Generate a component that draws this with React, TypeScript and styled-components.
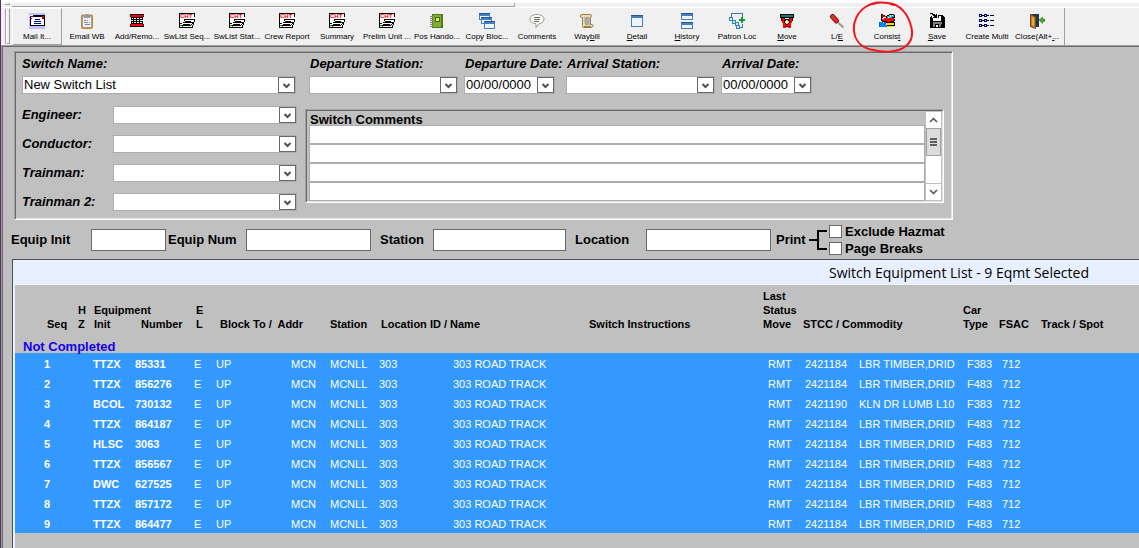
import React, { ReactNode, useId } from 'react';
import styled, { createGlobalStyle } from 'styled-components';

const GlobalStyle = createGlobalStyle`
  *, *::before, *::after { box-sizing: border-box; }
  body {
    margin: 0;
    background: #c0c0c0;
    color: #000;
    font: 13px/18px "Liberation Sans", Arial, sans-serif;
    overflow: hidden;
  }
  button, input, select { font: inherit; color: inherit; margin: 0; border-radius: 0; }
`;

const Window = styled.div`
  min-height: 100vh;
  display: flex;
  flex-direction: column;
  border-left: 1px solid #5b2f5f;
`;

/* ---------- toolbar ---------- */

const TopStrip = styled.div`
  height: 7px;
  border-top: 3px solid #fff;
  background: #f0f0f0;
  display: flex;
  gap: 2px;
  padding-left: 4px;
`;

const StripGrip = styled.span`
  width: 5px;
  height: 2px;
  border: solid #a0a0a0;
  border-width: 0 1px 1px 0;
`;

const StripEdge = styled.span`
  width: 503px;
  height: 4px;
  border: solid #a0a0a0;
  border-width: 0 1px 1px 0;
`;

const Toolbar = styled.header`
  height: 38px;
  display: flex;
  border-top: 1px solid #fff;
  background: #f0f0f0;
  padding-left: 4px;
`;

const Grip = styled.div`
  width: 5px;
  height: 35px;
  margin: 1px 2px 0 0;
  border: solid #a0a0a0;
  border-width: 0 1px;
  box-shadow: inset 1px 0 #fff, inset 0 -1px #a0a0a0;
`;

const Tools = styled.nav`
  display: flex;
  border-right: 1px solid #a0a0a0;
  padding-right: 2px;
`;

const ToolButton = styled.button<{ $raised?: boolean }>`
  position: relative;
  width: 50px;
  height: 37px;
  padding: 4px 0 0;
  display: flex;
  flex-direction: column;
  align-items: center;
  gap: 3px;
  background: none;
  border: 1px solid transparent;
  border-color: ${(p) => (p.$raised ? '#fff #a0a0a0 #a0a0a0 #fff' : 'transparent')};
  font-size: 8px;
  line-height: 10px;
  white-space: nowrap;

  & > svg { flex: none; }
`;

const Mark = styled.svg`
  position: absolute;
  left: -11px;
  top: -9px;
  z-index: 2;
  pointer-events: none;
`;

const Glyph = ({ children, crisp = true }: { children: ReactNode; crisp?: boolean }) => (
  <svg width="16" height="16" viewBox="0 0 16 16" fill="none" shapeRendering={crisp ? 'crispEdges' : 'auto'} aria-hidden>
    {children}
  </svg>
);

const palette: Record<string, string> = {
  k: '#000', w: '#fff', r: '#f00', c: '#00c8c8', b: '#0060ff', y: '#ffd800',
  g: '#808080', n: '#000080', t: '#008080', d: '#c00000',
};

const Pixels = ({ rows }: { rows: string[] }) => (
  <Glyph>
    {rows.flatMap((row, y) =>
      row.split('').map((ch, x) =>
        palette[ch] ? <rect key={`${x}-${y}`} x={x} y={y} width="1" height="1" fill={palette[ch]} /> : null,
      ),
    )}
  </Glyph>
);

const MailIcon = () => (
  <Glyph>
    <path fill="#c0c0ff" d="M0 0h16v16H0z" />
    <path fill="#000" d="M1 2h15v11H1z" />
    <path fill="#fff" d="M2 4h13v8H2zM1 2h3v1H1z" />
    <path fill="#800080" d="M1 3h4v1H1zM1 5h2v1H1z" />
    <path fill="#c00000" d="M13 3h2v3h-2z" />
    <path fill="#0000a0" d="M6 6h5v1H6zM5 8h7v1H5zM5 10h7v1H5z" />
  </Glyph>
);

const ClipboardIcon = () => (
  <Glyph crisp={false}>
    <rect x="2.5" y="2" width="11" height="13.5" rx="1" fill="#c89a5b" stroke="#b08850" />
    <path fill="#eef3fb" d="M4 4h8v10H4z" />
    <path fill="#8f9bb0" d="M5 3h6v2H5zM6.500 1h3v2h-3z" />
    <path stroke="#6c8cc0" d="M5 7.500h2M8 7.500h1M5 9.500h4M10 9.500h1M6 11.500h5" />
  </Glyph>
);

const TrackIcon = () => (
  <Pixels
    rows={[
      '',
      ' kkkkkkkkkkkkkk ',
      ' rrrrrrrrrrrrrr ',
      ' krrrrrrrrrrrrk ',
      '  kkkkkkkkkkkk  ',
      '  kwkwwkwwkwwk  ',
      '  kkkkkkkkkkkk  ',
      '    k  k  k     ',
      '  kkkkkkkkkkkk  ',
      '  kwkwwkwwkwwk  ',
      '  kkkkkkkkkkkk  ',
      ' krrrrrrrrrrrrk ',
      ' rrrrrrrrrrrrrr ',
      ' kkkkkkkkkkkkkk ',
    ]}
  />
);

const ChtIcon = () => (
  <Glyph>
    <path fill="#fff" d="M1 1h14v8l-2 6H1z" />
    <path stroke="#000" d="M.500 15V.500h15V4M5 6.500h10.500V9M5 6v2M4 9.500h10V12M6 8.500h6M2.500 12.500h9l2-2M4 11.500h7M1 14.500h12V12M15.500 6v3M1 10.500h2" />
    <path stroke="#008000" d="M1 12.500h2M3.500 13v1" />
    <text x="1" y="5" fill="#f00" fontFamily="Liberation Sans, sans-serif" fontWeight="700" fontSize="6">CHT</text>
  </Glyph>
);

const BookIcon = () => (
  <Glyph>
    <path fill="#4f7a1c" d="M3 1h11v14H3z" />
    <path fill="#7fb02c" d="M4 2h8v12H4z" />
    <path fill="#3d6414" d="M6 4h5v5H6z" />
    <path fill="#f4e84c" d="M7 5h3v3H7z" />
    <path stroke="#888" d="M1 3.500h3M1 5.500h3M1 7.500h3M1 9.500h3M1 11.500h3M1 13.500h3" />
  </Glyph>
);

const Pane = ({ x, y, w, h }: { x: number; y: number; w: number; h: number }) => (
  <>
    <path fill="#4a7ebb" d={`M${x} ${y}h${w}v${h}h-${w}z`} />
    <path fill="#1f56a8" d={`M${x} ${y}h${w}v1h-${w}z`} />
    <path fill="#eef6fd" d={`M${x + 1} ${y + 3}h${w - 2}v${h - 4}h-${w - 2}z`} />
  </>
);

const CopyIcon = () => (
  <Glyph>
    <Pane x={0} y={0} w={11} h={7} />
    <Pane x={2} y={4} w={11} h={7} />
    <Pane x={5} y={8} w={11} h={8} />
  </Glyph>
);

const CommentIcon = () => (
  <Glyph crisp={false}>
    <path fill="#fffef4" stroke="#999" d="M8 1.500c4 0 7 1.800 7 4.500s-2 4.500-5 4.700L7 14.500v-3.800C3 10.500 1 8.700 1 6s3-4.500 7-4.500z" />
    <path stroke="#666" d="M5 4.500h6M5 6.500h6M5 8.500h5" />
  </Glyph>
);

const ScrollIcon = () => (
  <Glyph crisp={false}>
    <path fill="#ecd9ab" stroke="#9a7b45" d="M2.500 1.500h9c1.500 0 1.500 2.500 0 2.500v7.500h1.500c1.500 0 1 3-.5 3H5c-2 0-1.500-2-1.500-3V4.500h-1c-1.500 0-1.500-3 0-3z" />
    <path stroke="#5877a5" d="M5.500 5h5M5.500 7h5M5.500 9h5M6 11h4.500" />
    <path stroke="#9a7b45" d="M5 13.500h7" />
  </Glyph>
);

const DetailIcon = () => (
  <Glyph>
    <Pane x={2} y={2} w={12} h={12} />
  </Glyph>
);

const HistoryIcon = () => (
  <Glyph>
    <Pane x={2} y={0} w={12} h={7} />
    <Pane x={2} y={9} w={12} h={7} />
  </Glyph>
);

const PatronIcon = () => (
  <Glyph>
    <path stroke="#3a78b5" d="M2.500 4V.500h11V4M13.500 11v3.500H11" />
    <path stroke="#2f86b5" fill="#d8effb" d="M.500 4.500h3v3h-3zM3.500 7.500h3v3h-3zM6.500 9.500h3v3h-3zM7.500 12.500h3v3h-3z" />
    <path stroke="#159a2c" strokeWidth="2" d="M10 7h6M13 4v6" />
  </Glyph>
);

const MoveIcon = () => (
  <Pixels
    rows={[
      '',
      ' kkkkkkkkkkkkkk ',
      ' kttttttttttttk ',
      ' kttttttttttttk ',
      ' kkkkkkkkkkkkkk ',
      '  krrk    krrk  ',
      '  krrrkkkkrrrk  ',
      '  krrkkyykkrrk  ',
      '   rrkywwykrr   ',
      '   rrkywwykrr   ',
      '    rrkyykrr    ',
      '    rrrkkrrr    ',
      '    rrrrrrrr    ',
      '    rrrkkrrr    ',
      '    rrr  rrr    ',
    ]}
  />
);

const ScrewdriverIcon = () => (
  <Glyph crisp={false}>
    <path stroke="#8c1414" strokeWidth="5" strokeLinecap="round" d="M3.500 3.500l4 4.500" />
    <path stroke="#e03030" strokeWidth="3" strokeLinecap="round" d="M3.500 3.500l4 4.500" />
    <path stroke="#999" strokeWidth="2" d="M9.500 10l5 4.500" />
  </Glyph>
);

const ConsistIcon = () => (
  <Pixels
    rows={[
      '',
      '  kk      kkkkk ',
      '  krrk  kkcwcwck',
      '  krrrrkcccwccck',
      '  kk   kcwccckkk',
      '  k  rrrrrrrrrr ',
      '  krrrrrrrrrrrrk',
      '  krrrrrrrrrrrrk',
      '   kkkkkrrrrkkk ',
      'bbcb bbkkkkkkkkk',
      'bcbbcbbyyyyyyyyk',
      'bbbcbbcyyyyyyyyk',
      'bcbbcbbckkkkkkkk',
      'bbcbbcbbyyyyyyy ',
    ]}
  />
);

const SaveIcon = () => (
  <Pixels
    rows={[
      ' kkk            ',
      '   kkk k        ',
      '    kkkk kkkkk  ',
      '  k  kkk kwwkkk ',
      ' kk kkkk kwwkkkk',
      ' kkkwwwwwwwwkkkk',
      ' kkkwwwwwwwwkkkk',
      ' kkkwwwwwwwwkkkk',
      ' kkkkkkkkkkkkkkk',
      ' kkkgggggggggkkk',
      ' kkkgggggggggkkk',
      ' kkkggkkkkggkkkk',
      ' kkkggkwwkggkkkk',
      ' kkkggkwwkggkkkk',
      ' kkkkkkkkkkkkkkk',
    ]}
  />
);

const MultiIcon = () => (
  <Pixels
    rows={[
      '',
      'nnn  nnn        ',
      'n nkkn nkk nnkk ',
      'nnn  nnn        ',
      '',
      '',
      'nnn  nnn        ',
      'n nkkn nkk nnkk ',
      'nnn  nnn        ',
      '',
      '',
      'nnn  nnn        ',
      'n nkkn nkk nnkk ',
      'nnn  nnn        ',
    ]}
  />
);

const DoorIcon = () => (
  <Glyph crisp={false}>
    <path fill="#20364f" d="M1 1h9v13H1z" />
    <path fill="#c07c2c" stroke="#7c4b13" d="M1.500 1.500L6.500 4v11.500l-5-2z" />
    <path fill="#e8a84e" d="M3 4l2 1v8l-2-1z" />
    <path fill="#46a52a" stroke="#2c7a18" strokeWidth=".5" d="M10 7l3.500-3v2H16v2.500h-2.500v2z" />
  </Glyph>
);

type Tool = { icon: () => ReactNode; label: ReactNode; id: string };

const tools: Tool[] = [
  { id: 'mail', icon: MailIcon, label: 'Mail It...' },
  { id: 'email', icon: ClipboardIcon, label: 'Email WB' },
  { id: 'add', icon: TrackIcon, label: 'Add/Remo...' },
  { id: 'seq', icon: ChtIcon, label: 'SwList Seq...' },
  { id: 'stat', icon: ChtIcon, label: 'SwList Stat...' },
  { id: 'crew', icon: ChtIcon, label: 'Crew Report' },
  { id: 'summary', icon: ChtIcon, label: 'Summary' },
  { id: 'prelim', icon: ChtIcon, label: 'Prelim Unit ...' },
  { id: 'pos', icon: BookIcon, label: 'Pos Hando...' },
  { id: 'copy', icon: CopyIcon, label: 'Copy Bloc...' },
  { id: 'comments', icon: CommentIcon, label: 'Comments' },
  { id: 'waybill', icon: ScrollIcon, label: <>Way<u>b</u>ill</> },
  { id: 'detail', icon: DetailIcon, label: <><u>D</u>etail</> },
  { id: 'history', icon: HistoryIcon, label: <><u>H</u>istory</> },
  { id: 'patron', icon: PatronIcon, label: 'Patron Loc' },
  { id: 'move', icon: MoveIcon, label: <><u>M</u>ove</> },
  { id: 'le', icon: ScrewdriverIcon, label: <>L/<u>E</u></> },
  { id: 'consist', icon: ConsistIcon, label: <>Consis<u>t</u></> },
  { id: 'save', icon: SaveIcon, label: <><u>S</u>ave</> },
  { id: 'multi', icon: MultiIcon, label: 'Create Multi' },
  { id: 'close', icon: DoorIcon, label: <>Close(Alt+<u>.</u>..</> },
];

/* ---------- form panel ---------- */

const Main = styled.main`
  flex: 1;
  display: flex;
  flex-direction: column;
  border: solid #a0a0a0;
  border-width: 1px 0 0 1px;
  box-shadow: inset 1px 1px #696969;
`;

const sunken = `
  border: 1px solid;
  border-color: #a0a0a0 #fff #fff #a0a0a0;
  box-shadow: inset 1px 1px #696969, inset -1px -1px #e3e3e3;
`;

const FormPanel = styled.section`
  ${sunken}
  max-width: 939px;
  width: 100%;
  margin: 5px 0 0 12px;
  padding: 2px 8px 8px 7px;
  display: grid;
  grid-template-columns: 283px 1fr;
`;

const FieldLabel = styled.label`
  font-weight: 700;
  font-style: italic;
  line-height: 20px;
  white-space: nowrap;
`;

const Field = styled.div<{ $width: number }>`
  width: ${(p) => p.$width}px;
  display: flex;
  flex-direction: column;
  gap: 2px;
`;

const ComboBox = styled.div`
  position: relative;
  display: flex;
  height: 18px;
`;

const ComboSelect = styled.select`
  appearance: none;
  width: 100%;
  padding: 0 20px 0 1px;
  border: 1px solid #abadb3;
  background: #fff;
  line-height: 16px;
  outline: none;
`;

const ComboArrow = styled.span`
  position: absolute;
  top: 1px;
  right: 1px;
  bottom: 1px;
  width: 17px;
  display: grid;
  place-items: center;
  border: 1px solid #696969;
  background: #fff;
  pointer-events: none;
`;

const Combo = ({ id, value = '' }: { id: string; value?: string }) => (
  <ComboBox>
    <ComboSelect id={id} defaultValue={value}>
      <option value={value}>{value}</option>
    </ComboSelect>
    <ComboArrow>
      <svg width="9" height="7" viewBox="0 0 9 7" fill="none" aria-hidden>
        <path d="M1.500 2l3 3 3-3" stroke="#505050" strokeWidth="2" />
      </svg>
    </ComboArrow>
  </ComboBox>
);

const LabelledCombo = ({ label, width, value }: { label: string; width: number; value?: string }) => {
  const id = useId();
  return (
    <Field $width={width}>
      <FieldLabel htmlFor={id}>{label}</FieldLabel>
      <Combo id={id} value={value} />
    </Field>
  );
};

const Crew = styled.div`
  display: flex;
  flex-direction: column;
  gap: 11px;
  margin-top: 12px;
`;

const CrewRow = styled.div`
  display: grid;
  grid-template-columns: 91px 184px;
  height: 18px;

  & > label { line-height: 18px; }
`;

const CrewLine = ({ label }: { label: string }) => {
  const id = useId();
  return (
    <CrewRow>
      <FieldLabel htmlFor={id}>{label}</FieldLabel>
      <Combo id={id} />
    </CrewRow>
  );
};

const Stops = styled.div`
  display: flex;
  gap: 11px;
  padding-left: 4px;

  & label { padding-left: 1px; }
`;

const Stop = styled.div`
  display: flex;
  gap: 6px;
`;

const Comments = styled.div`
  ${sunken}
  margin-top: 15px;
  padding: 1px 1px 1px 3px;
  display: flex;
`;

const CommentList = styled.div`
  flex: 1;
  min-width: 0;
  display: flex;
  flex-direction: column;
`;

const CommentTitle = styled.h2`
  margin: 0;
  padding-left: 1px;
  font-size: 13px;
  line-height: 17px;
  height: 14px;
`;

const CommentInput = styled.input`
  width: 100%;
  height: 19px;
  padding: 0 2px;
  border: 1px solid #abadb3;
  background: #fff;
  outline: none;
`;

const ScrollBar = styled.div`
  width: 17px;
  display: flex;
  flex-direction: column;
  background: #fff;
  border: 1px solid #c0c0c0;
`;

const ScrollButton = styled.button`
  height: 16px;
  padding: 0;
  border: 0;
  display: grid;
  place-items: center;
  background: #fff;
`;

const ScrollTrack = styled.div`
  flex: 1;
  border-bottom: 1px solid #c0c0c0;
`;

const ScrollThumb = styled.div`
  height: 28px;
  border: 1px solid #a0a0a0;
  background: #dcdcdc;
  display: grid;
  place-items: center;
`;

/* ---------- filters ---------- */

const Filters = styled.section`
  height: 39px;
  padding-left: 9px;
  display: flex;
  align-items: center;
  font-weight: 700;
`;

const FilterLabel = styled.label<{ $width: number }>`
  width: ${(p) => p.$width}px;
  white-space: nowrap;
`;

const FilterInput = styled.input<{ $width: number; $gap: number }>`
  width: ${(p) => p.$width}px;
  height: 22px;
  margin-right: ${(p) => p.$gap}px;
  padding: 0 3px;
  border: 1px solid #696969;
  background: #fff;
`;

const PrintLabel = styled.span`
  width: 33px;
`;

const Checks = styled.div`
  display: flex;
  flex-direction: column;
`;

const CheckLabel = styled.label`
  display: flex;
  align-items: center;
  gap: 3px;
  line-height: 17px;
  white-space: nowrap;
`;

const CheckBox = styled.input`
  appearance: none;
  width: 13px;
  height: 13px;
  border: 1px solid #696969;
  background: #fff;
`;

const filters = [
  { label: 'Equip Init', labelWidth: 80, width: 75, gap: 2 },
  { label: 'Equip Num', labelWidth: 78, width: 125, gap: 9 },
  { label: 'Station', labelWidth: 53, width: 133, gap: 9 },
  { label: 'Location', labelWidth: 71, width: 125, gap: 5 },
];

/* ---------- equipment list ---------- */

const ListPanel = styled.section`
  flex: 1;
  margin-left: 10px;
  padding-left: 2px;
  border: solid #505050;
  border-width: 1px 0 0 1px;
  background: #e8efff;
  display: flex;
  flex-direction: column;
`;

const ListTitle = styled.h1`
  margin: 0;
  padding-left: 814px;
  font: 400 14px/25px "Open Sans", "Segoe UI", sans-serif;
  white-space: nowrap;
`;

const ListBody = styled.div`
  flex: 1;
  background: #c0c0c0;
`;

const Table = styled.table`
  width: 100%;
  table-layout: fixed;
  border-collapse: collapse;
  font-size: 11px;
`;

const Head = styled.th<{ $indent?: number }>`
  height: 55px;
  padding: 0 0 9px ${(p) => p.$indent ?? 0}px;
  vertical-align: bottom;
  text-align: left;
  line-height: 14px;
  white-space: nowrap;
`;

const SplitHead = styled.span`
  display: grid;
  grid-template-columns: 47px 1fr;
`;

const GroupHead = styled.th`
  height: 13px;
  padding: 0 0 0 8px;
  text-align: left;
  font-size: 13px;
  line-height: 13px;
  color: #1400f0;
`;

const Row = styled.tr`
  background: #3399ff;
  color: #fff;
`;

const Cell = styled.td<{ $bold?: boolean; $indent?: number }>`
  height: 20px;
  padding: 2px 0 0 ${(p) => p.$indent ?? 0}px;
  line-height: 18px;
  font-weight: ${(p) => (p.$bold ? 700 : 400)};
  white-space: nowrap;
`;

const columns = [63, 15, 42, 59, 22, 75, 39, 49, 74, 119, 191, 37, 54, 108, 35, 39];

const equipment = [
  ['TTZX', '85331', '2421184', 'LBR TIMBER,DRID', 'F383'],
  ['TTZX', '856276', '2421184', 'LBR TIMBER,DRID', 'F483'],
  ['BCOL', '730132', '2421190', 'KLN DR LUMB L10', 'F383'],
  ['TTZX', '864187', '2421184', 'LBR TIMBER,DRID', 'F483'],
  ['HLSC', '3063', '2421184', 'LBR TIMBER,DRID', 'F483'],
  ['TTZX', '856567', '2421184', 'LBR TIMBER,DRID', 'F483'],
  ['DWC', '627525', '2421184', 'LBR TIMBER,DRID', 'F483'],
  ['TTZX', '857172', '2421184', 'LBR TIMBER,DRID', 'F483'],
  ['TTZX', '864477', '2421184', 'LBR TIMBER,DRID', 'F483'],
];

export default function App() {
  return (
    <Window>
      <GlobalStyle />
      <TopStrip>
        <StripGrip />
        <StripEdge />
      </TopStrip>
      <Toolbar>
        <Grip />
        <Tools>
          {tools.map(({ id, icon: Icon, label }) => (
            <ToolButton key={id} type="button" $raised={id === 'mail'}>
              <Icon />
              <span>{label}</span>
              {id === 'consist' && (
                <Mark width="62" height="54" viewBox="0 0 62 54" fill="none" aria-hidden>
                  <path
                    d="M42 5C33 1 22 2 15 6C5 12 1 22 2 31C3 41 10 48 21 50C33 53 47 52 54 46C60 41 61 33 59 26C56 14 48 4 36 3C30 2 25 2 21 4"
                    stroke="#f5141c"
                    strokeWidth="2"
                    strokeLinecap="round"
                  />
                </Mark>
              )}
            </ToolButton>
          ))}
        </Tools>
      </Toolbar>

      <Main>
        <FormPanel>
          <div>
            <LabelledCombo label="Switch Name:" width={274} value="New Switch List" />
            <Crew>
              <CrewLine label="Engineer:" />
              <CrewLine label="Conductor:" />
              <CrewLine label="Trainman:" />
              <CrewLine label="Trainman 2:" />
            </Crew>
          </div>
          <div>
            <Stops>
              <Stop>
                <LabelledCombo label="Departure Station:" width={149} />
                <LabelledCombo label="Departure Date:" width={91} value="00/00/0000" />
              </Stop>
              <Stop>
                <LabelledCombo label="Arrival Station:" width={149} />
                <LabelledCombo label="Arrival Date:" width={91} value="00/00/0000" />
              </Stop>
            </Stops>
            <Comments>
              <CommentList>
                <CommentTitle>Switch Comments</CommentTitle>
                {[1, 2, 3, 4].map((n) => (
                  <CommentInput key={n} type="text" aria-label={`Switch comment ${n}`} />
                ))}
              </CommentList>
              <ScrollBar>
                <ScrollButton type="button" aria-label="Scroll up">
                  <svg width="9" height="6" viewBox="0 0 9 6" fill="none" aria-hidden>
                    <path d="M1 5l3.500-3.500L8 5" stroke="#505050" strokeWidth="1.500" />
                  </svg>
                </ScrollButton>
                <ScrollThumb>
                  <svg width="7" height="8" viewBox="0 0 7 8" aria-hidden>
                    <path d="M0 0h7v2H0zM0 3h7v2H0zM0 6h7v2H0z" fill="#606060" />
                  </svg>
                </ScrollThumb>
                <ScrollTrack />
                <ScrollButton type="button" aria-label="Scroll down">
                  <svg width="9" height="6" viewBox="0 0 9 6" fill="none" aria-hidden>
                    <path d="M1 1l3.500 3.500L8 1" stroke="#505050" strokeWidth="1.500" />
                  </svg>
                </ScrollButton>
              </ScrollBar>
            </Comments>
          </div>
        </FormPanel>

        <Filters>
          {filters.map((f) => (
            <React.Fragment key={f.label}>
              <FilterLabel htmlFor={f.label} $width={f.labelWidth}>{f.label}</FilterLabel>
              <FilterInput id={f.label} type="text" $width={f.width} $gap={f.gap} />
            </React.Fragment>
          ))}
          <PrintLabel>Print</PrintLabel>
          <svg width="20" height="22" viewBox="0 0 20 22" fill="none" shapeRendering="crispEdges" aria-hidden>
            <path d="M0 11h8M18 2H9v18h9" stroke="#000" strokeWidth="2" />
          </svg>
          <Checks>
            <CheckLabel><CheckBox type="checkbox" />Exclude Hazmat</CheckLabel>
            <CheckLabel><CheckBox type="checkbox" />Page Breaks</CheckLabel>
          </Checks>
        </Filters>

        <ListPanel>
          <ListTitle>Switch Equipment List - 9 Eqmt Selected</ListTitle>
          <ListBody>
            <Table>
              <colgroup>
                {columns.map((w, i) => <col key={i} style={{ width: w }} />)}
                <col />
              </colgroup>
              <thead>
                <tr>
                  <Head $indent={32}>Seq</Head>
                  <Head>H<br />Z</Head>
                  <Head colSpan={2} $indent={1}>
                    Equipment
                    <SplitHead><span>Init</span><span>Number</span></SplitHead>
                  </Head>
                  <Head $indent={2}>E<br />L</Head>
                  <Head colSpan={2} $indent={4}>Block To /&nbsp; Addr</Head>
                  <Head>Station</Head>
                  <Head colSpan={2} $indent={2}>Location ID / Name</Head>
                  <Head $indent={17}>Switch Instructions</Head>
                  <Head>Last<br />Status<br />Move</Head>
                  <Head colSpan={2} $indent={3}>STCC / Commodity</Head>
                  <Head $indent={1}>Car<br />Type</Head>
                  <Head $indent={2}>FSAC</Head>
                  <Head $indent={5}>Track / Spot</Head>
                </tr>
                <tr>
                  <GroupHead colSpan={17}>Not Completed</GroupHead>
                </tr>
              </thead>
              <tbody>
                {equipment.map(([init, number, stcc, commodity, type], i) => (
                  <Row key={number}>
                    <Cell $bold $indent={29}>{i + 1}</Cell>
                    <Cell />
                    <Cell $bold>{init}</Cell>
                    <Cell $bold>{number}</Cell>
                    <Cell>E</Cell>
                    <Cell>UP</Cell>
                    <Cell>MCN</Cell>
                    <Cell>MCNLL</Cell>
                    <Cell>303</Cell>
                    <Cell>303 ROAD TRACK</Cell>
                    <Cell />
                    <Cell $indent={5}>RMT</Cell>
                    <Cell $indent={5}>{stcc}</Cell>
                    <Cell $indent={5}>{commodity}</Cell>
                    <Cell $indent={5}>{type}</Cell>
                    <Cell $indent={5}>712</Cell>
                    <Cell />
                  </Row>
                ))}
              </tbody>
            </Table>
          </ListBody>
        </ListPanel>
      </Main>
    </Window>
  );
}
